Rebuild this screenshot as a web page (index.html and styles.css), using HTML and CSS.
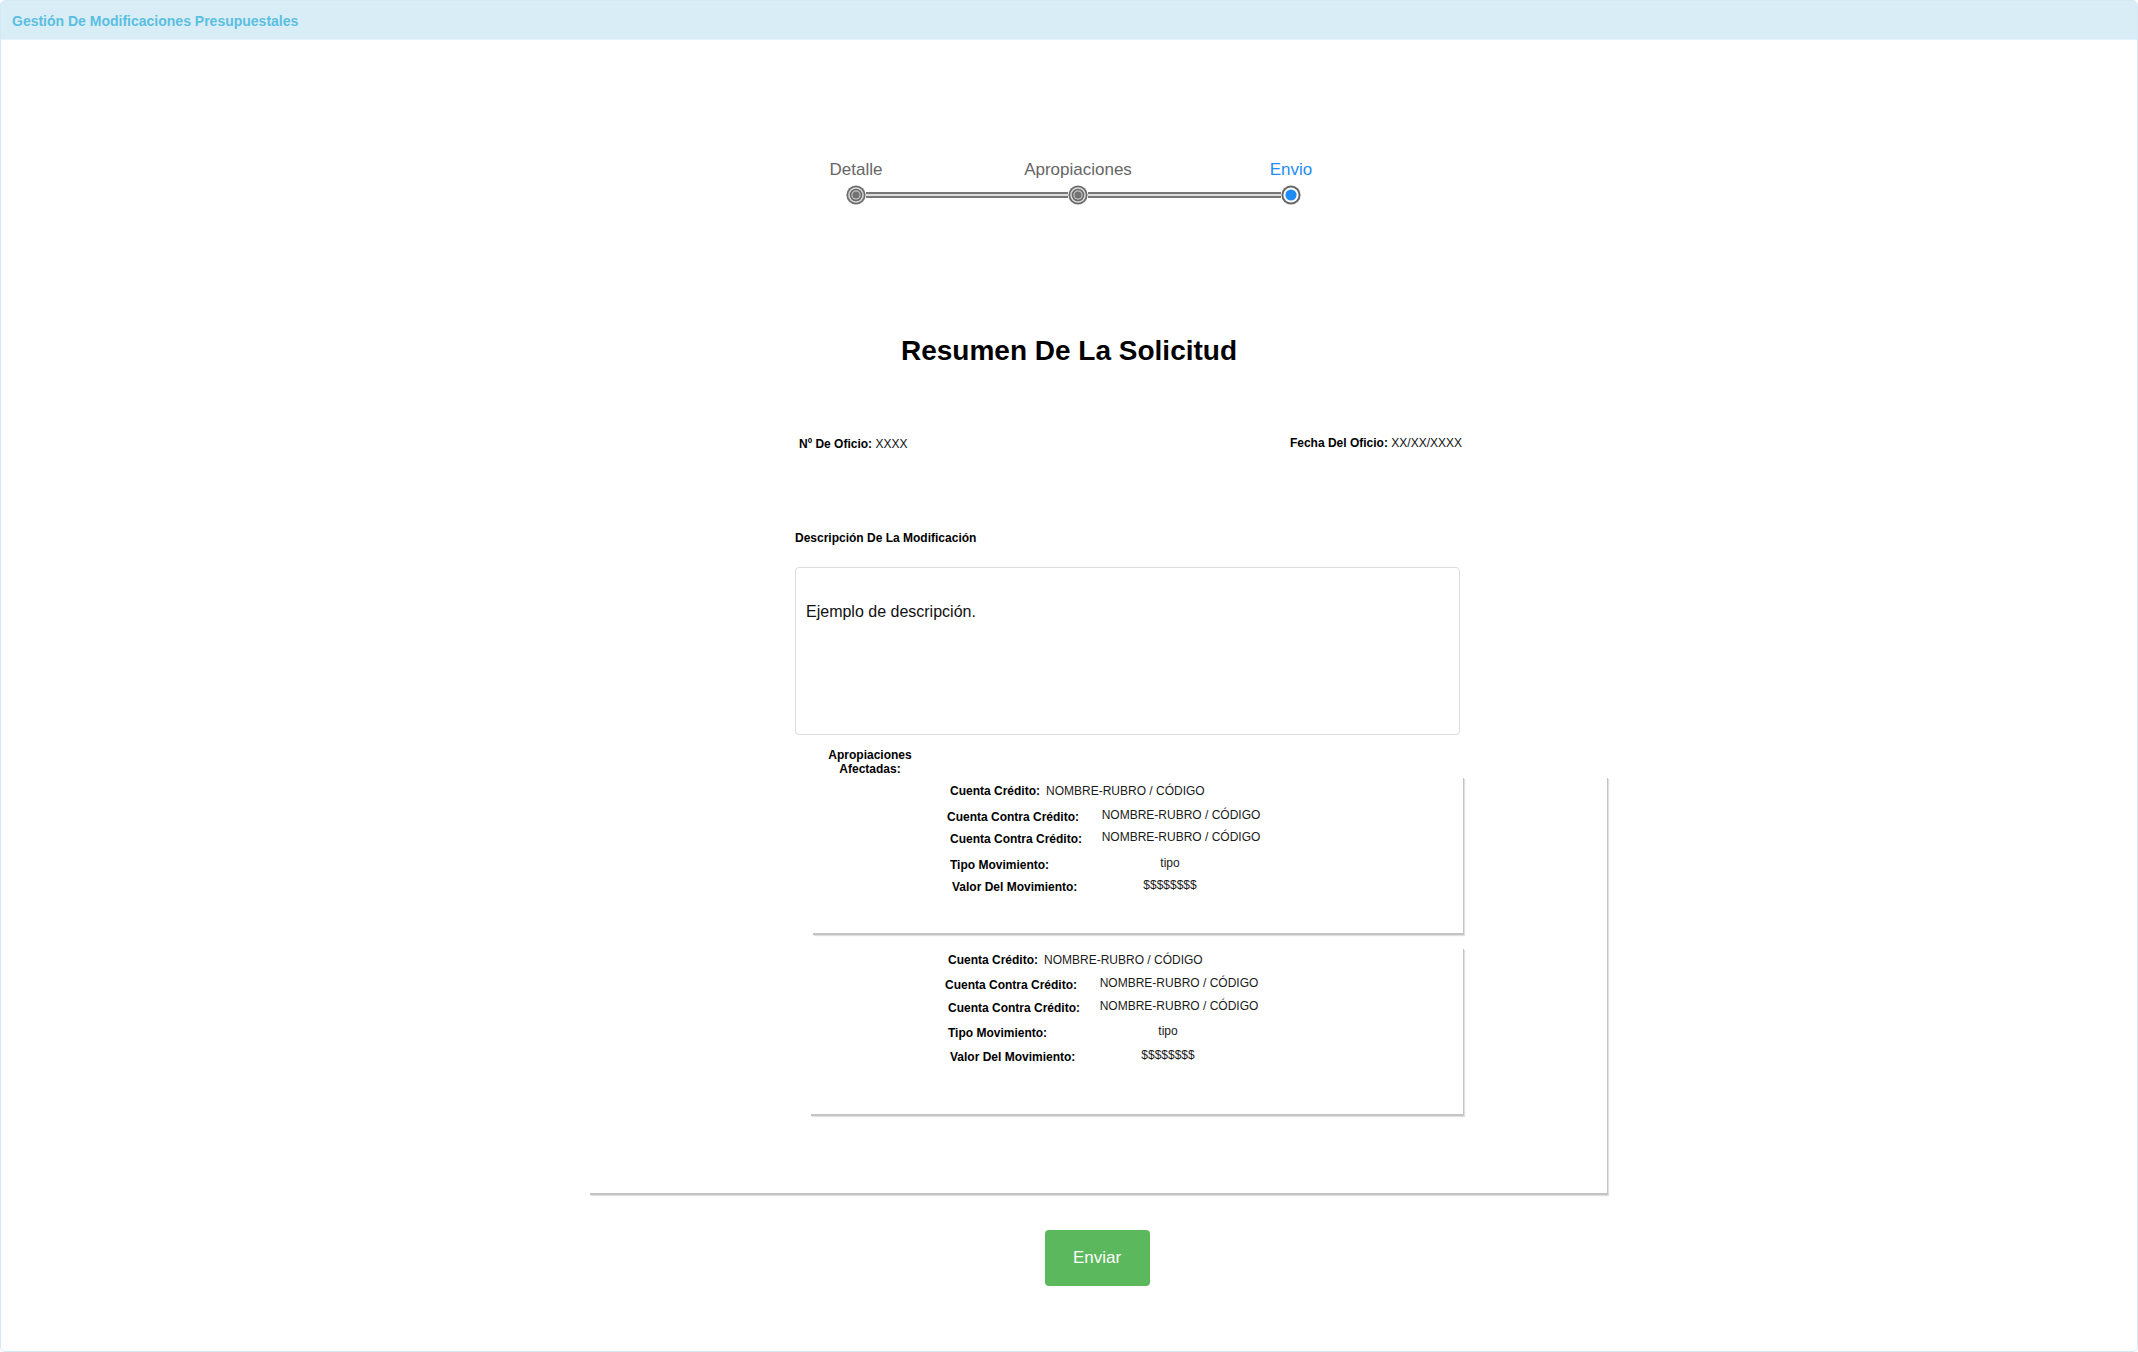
FILE: index.html
```html
<!DOCTYPE html>
<html lang="es">
<head>
<meta charset="utf-8">
<title>Gestión De Modificaciones Presupuestales</title>
<link rel="stylesheet" href="styles.css">
</head>
<body>
<div class="panel">
  <div class="panel-heading">Gestión De Modificaciones Presupuestales</div>
  <div class="panel-body">
    <div class="stepper">
      <div class="step-labels">
        <span class="step-label">Detalle</span>
        <span class="step-label step-label-2">Apropiaciones</span>
        <span class="step-label step-label-3 is-active">Envio</span>
      </div>
      <div class="step-track">
        <svg class="dot" width="20" height="20" viewBox="0 0 20 20" aria-hidden="true">
          <circle cx="10" cy="10" r="9.6" fill="#6b6b6b"/>
          <circle cx="10" cy="10" r="7.8" fill="#d9d9d9"/>
          <circle cx="10" cy="10" r="6.3" fill="#6b6b6b"/>
          <circle cx="10" cy="10" r="4.7" fill="#c4c4c4"/>
          <circle cx="10" cy="10" r="3.5" fill="#737373"/>
        </svg>
        <span class="track-line track-line-1"></span>
        <svg class="dot" width="20" height="20" viewBox="0 0 20 20" aria-hidden="true">
          <circle cx="10" cy="10" r="9.6" fill="#6b6b6b"/>
          <circle cx="10" cy="10" r="7.8" fill="#d9d9d9"/>
          <circle cx="10" cy="10" r="6.3" fill="#6b6b6b"/>
          <circle cx="10" cy="10" r="4.7" fill="#c4c4c4"/>
          <circle cx="10" cy="10" r="3.5" fill="#737373"/>
        </svg>
        <span class="track-line track-line-2"></span>
        <svg class="dot dot-active" width="20" height="20" viewBox="0 0 20 20" aria-hidden="true">
          <circle cx="10" cy="10" r="9.6" fill="#666666"/>
          <circle cx="10" cy="10" r="7.6" fill="#ffffff"/>
          <circle cx="10" cy="10" r="5.6" fill="#1e8cf5"/>
        </svg>
      </div>
    </div>

    <h1 class="summary-title">Resumen De La Solicitud</h1>

    <div class="content">
      <div class="meta-row">
        <div class="meta-item"><b>Nº De Oficio:</b> XXXX</div>
        <div class="meta-item meta-item-right"><b>Fecha Del Oficio:</b> XX/XX/XXXX</div>
      </div>

      <div class="desc-label">Descripción De La Modificación</div>
      <div class="desc-box">Ejemplo de descripción.</div>

      <div class="approp-label">Apropiaciones<br>Afectadas:</div>
      <div class="approp-box">
        <div class="card card-1">
          <div class="row row-inline"><span class="lbl">Cuenta Crédito:</span><span class="val-inline">NOMBRE-RUBRO / CÓDIGO</span></div>
          <div class="row r-gap-a shift-l"><span class="lbl">Cuenta Contra Crédito:</span><span class="val">NOMBRE-RUBRO / CÓDIGO</span></div>
          <div class="row r-gap-b"><span class="lbl">Cuenta Contra Crédito:</span><span class="val">NOMBRE-RUBRO / CÓDIGO</span></div>
          <div class="row r-gap-a"><span class="lbl">Tipo Movimiento:</span><span class="val val-c">tipo</span></div>
          <div class="row r-gap-b shift-r"><span class="lbl">Valor Del Movimiento:</span><span class="val val-c">$$$$$$$$</span></div>
        </div>
        <div class="card card-2">
          <div class="row row-inline"><span class="lbl">Cuenta Crédito:</span><span class="val-inline">NOMBRE-RUBRO / CÓDIGO</span></div>
          <div class="row r-gap-c shift-l"><span class="lbl">Cuenta Contra Crédito:</span><span class="val">NOMBRE-RUBRO / CÓDIGO</span></div>
          <div class="row r-gap-d"><span class="lbl">Cuenta Contra Crédito:</span><span class="val">NOMBRE-RUBRO / CÓDIGO</span></div>
          <div class="row r-gap-c"><span class="lbl">Tipo Movimiento:</span><span class="val val-c">tipo</span></div>
          <div class="row r-gap-e shift-r"><span class="lbl">Valor Del Movimiento:</span><span class="val val-c">$$$$$$$$</span></div>
        </div>
      </div>

      <div class="actions">
        <button class="btn-send" type="button">Enviar</button>
      </div>
    </div>
  </div>
</div>
</body>
</html>
```

FILE: styles.css
```css
* {
  box-sizing: border-box;
}

html, body {
  margin: 0;
  padding: 0;
  background: #ffffff;
}

body {
  font-family: "Liberation Sans", Arial, Helvetica, sans-serif;
  color: #000;
  width: 2138px;
  height: 1352px;
  overflow: hidden;
}

.panel {
  width: 2138px;
  height: 1352px;
  border: 1px solid #d3e9f6;
  border-radius: 5px;
  background: #ffffff;
  overflow: hidden;
}

.panel-heading {
  height: 39px;
  background: #d9edf7;
  border-bottom: 1px solid #e4f2fa;
  padding-left: 11px;
  font-size: 14px;
  line-height: 40px;
  font-weight: bold;
  color: #5bbfe0;
}

.panel-body {
  padding: 0;
}

/* ---------- stepper ---------- */
.stepper {
  margin-top: 119px;
  margin-left: 775px;
}

.step-labels {
  display: flex;
  height: 20px;
}

.step-label {
  width: 160px;
  text-align: center;
  font-size: 17px;
  line-height: 22px;
  color: #666666;
}

.step-label-2 {
  margin-left: 62px;
}

.step-label-3 {
  margin-left: 53px;
}

.step-label.is-active {
  color: #1e8cf5;
}

.step-track {
  display: flex;
  align-items: center;
  height: 20px;
  margin-top: 6px;
  padding-left: 70px;
}

.dot {
  display: block;
  flex: none;
}

.track-line {
  display: block;
  flex: none;
  height: 6px;
  background: #dedede;
  border-top: 2px solid #777777;
  border-bottom: 2px solid #777777;
}

.track-line-1 {
  width: 202px;
}

.track-line-2 {
  width: 193px;
}

/* ---------- title ---------- */
.summary-title {
  margin: 130px 0 0 0;
  text-align: center;
  font-size: 28px;
  line-height: 32px;
  font-weight: bold;
  color: #000;
}

/* ---------- content column ---------- */
.content {
  margin-left: 588px;
  width: 1018px;
}

.meta-row {
  display: flex;
  justify-content: space-between;
  align-items: flex-start;
  margin-top: 70px;
  margin-left: 210px;
  width: 663px;
  font-size: 12px;
  line-height: 14px;
  color: #111;
}

.meta-item b {
  color: #000;
}

.meta-item-right {
  margin-top: -1px;
}

.desc-label {
  margin-top: 80px;
  margin-left: 206px;
  font-size: 12px;
  line-height: 14px;
  font-weight: bold;
}

.desc-box {
  margin-top: 22px;
  margin-left: 206px;
  width: 665px;
  height: 168px;
  border: 1px solid #dcdcdc;
  border-radius: 4px;
  padding: 34px 10px 0 10px;
  font-size: 16px;
  line-height: 20px;
  color: #111;
}

.approp-label {
  margin-top: 14px;
  margin-left: 231px;
  width: 100px;
  text-align: center;
  font-size: 12px;
  line-height: 13.5px;
  font-weight: bold;
}

.approp-box {
  width: 1018px;
  padding-bottom: 79px;
  box-shadow: 1px 2px 0 #c4c4c4, 2px 3px 1px rgba(0, 0, 0, 0.12);
}

.card {
  box-shadow: 1px 2px 0 #c4c4c4, 2px 3px 1px rgba(0, 0, 0, 0.12);
  padding-left: 138px;
}

.card-1 {
  margin-left: 223px;
  width: 651px;
  padding-top: 7.5px;
  padding-bottom: 38px;
}

.card-2 {
  margin-top: 14px;
  margin-left: 221px;
  width: 653px;
  padding-top: 6.5px;
  padding-bottom: 49px;
}

.row {
  display: flex;
  align-items: baseline;
  height: 15px;
  line-height: 15px;
}

.lbl {
  flex: none;
  width: 140px;
  font-size: 12px;
  font-weight: bold;
  color: #000;
  white-space: nowrap;
}

.row-inline .lbl {
  width: auto;
}

.val-inline {
  margin-left: 6px;
  font-size: 12px;
  color: #1a1a1a;
  white-space: nowrap;
}

.val {
  flex: none;
  width: 170px;
  margin-left: 6px;
  text-align: center;
  font-size: 12px;
  color: #1a1a1a;
  white-space: nowrap;
  position: relative;
  top: -2px;
}

.val.val-c {
  width: 160px;
  margin-left: 0;
}

.shift-l .lbl {
  margin-left: -3px;
  width: 143px;
}

.shift-r .lbl {
  margin-left: 2px;
  width: 138px;
}

.r-gap-a { margin-top: 11px; }
.r-gap-b { margin-top: 7px; }
.r-gap-c { margin-top: 10px; }
.r-gap-d { margin-top: 8px; }
.r-gap-e { margin-top: 9px; }

/* ---------- actions ---------- */
.actions {
  display: flex;
  justify-content: center;
  margin-top: 37px;
}

.btn-send {
  width: 105px;
  height: 56px;
  border: none;
  border-radius: 4px;
  background: #5cb85c;
  color: #ffffff;
  font-family: "Liberation Sans", Arial, Helvetica, sans-serif;
  font-size: 17px;
  line-height: 20px;
  padding: 0;
  margin-right: 2px;
  cursor: pointer;
}
```
